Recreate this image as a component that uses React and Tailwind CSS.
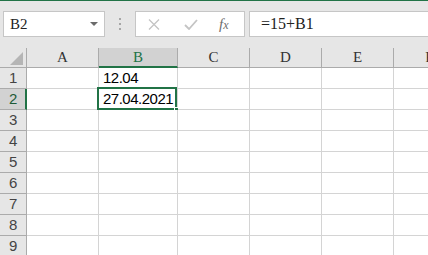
import React from "react";

const cols = [
  { key: "A", w: "w-[72px]" },
  { key: "B", w: "w-[79px]" },
  { key: "C", w: "w-[72px]" },
  { key: "D", w: "w-[72px]" },
  { key: "E", w: "w-[72px]" },
  { key: "F", w: "w-[72px]" },
];

const data = { "B1": "12.04", "B2": "27.04.2021" };

const serif = { fontFamily: '"Liberation Serif", serif' };

export default function App() {
  const rows = [1, 2, 3, 4, 5, 6, 7, 8, 9];

  return (
    <div className="w-[428px] h-[255px] overflow-hidden bg-[#e6e6e6] select-none">
      {/* top accent */}
      <div className="h-px bg-[#217346]" />

      {/* ================= FORMULA BAR ================= */}
      <div className="flex items-center h-[26px] mt-[10px]">
        <div className="ml-[3px] w-[102px] h-[26px] bg-white border border-[#c6c6c6] flex items-center justify-between pl-[6px] pr-[6px]">
          <span className="text-[15px] text-[#222]" style={serif}>B2</span>
          <svg width="8" height="4" viewBox="0 0 8 4">
            <path d="M0 0 L8 0 L4 4 Z" fill="#6b6b6b" />
          </svg>
        </div>

        <div className="w-[30px] flex flex-col items-center gap-[3px]">
          <span className="w-[2px] h-[2px] bg-[#a6a6a6]" />
          <span className="w-[2px] h-[2px] bg-[#a6a6a6]" />
          <span className="w-[2px] h-[2px] bg-[#a6a6a6]" />
        </div>

        <div className="w-[110px] h-[26px] bg-white border border-[#c6c6c6] flex items-center">
          <svg className="ml-[12px]" width="12" height="11" viewBox="0 0 12 11">
            <path d="M1 0.5 L11 10.5 M11 0.5 L1 10.5" stroke="#c4c4c4" strokeWidth="1.3" />
          </svg>
          <svg className="ml-[24px]" width="14" height="11" viewBox="0 0 14 11">
            <path d="M1 6 L5 10 L13 1" stroke="#c4c4c4" strokeWidth="1.8" fill="none" />
          </svg>
          <span
            className="ml-[21px] text-[15px] italic text-[#6e6e6e] leading-none"
            style={serif}
          >
            f<span className="text-[12px]">x</span>
          </span>
        </div>

        <div className="ml-[4px] flex-1 h-[26px] bg-white border-y border-l border-[#c6c6c6] flex items-center pl-[11px]">
          <span className="text-[16px] text-[#222]" style={serif}>=15+B1</span>
        </div>
      </div>

      {/* ================= SHEET ================= */}
      <div className="mt-[11px]">
        {/* column headers */}
        <div className="flex h-[20px]">
          <div className="w-[27px] shrink-0 border-r border-b border-[#ababab] flex items-end justify-end pr-[3px] pb-[2px]">
            <svg width="13" height="13" viewBox="0 0 13 13">
              <path d="M13 0 L13 13 L0 13 Z" fill="#b5b5b5" />
            </svg>
          </div>
          {cols.map((c) => (
            <div
              key={c.key}
              className={`${c.w} shrink-0 border-r border-[#ababab] flex items-center justify-center text-[15px] ${
                c.key === "B"
                  ? "bg-[#d2d2d2] text-[#217346] border-b-2 border-b-[#217346]"
                  : "text-[#333] border-b border-b-[#ababab]"
              }`}
              style={serif}
            >
              {c.key}
            </div>
          ))}
        </div>

        {/* rows */}
        {rows.map((r) => (
          <div key={r} className="flex h-[21px]">
            <div
              className={`w-[27px] shrink-0 border-b border-[#ababab] flex items-center pl-[9px] text-[15px] ${
                r === 2
                  ? "bg-[#d2d2d2] text-[#1e5b38] border-r-2 border-r-[#217346]"
                  : "bg-[#e6e6e6] text-[#444] border-r border-r-[#ababab]"
              }`}
              style={{ fontFamily: '"Liberation Sans", sans-serif' }}
            >
              {r}
            </div>
            {cols.map((c) => {
              const id = c.key + r;
              return (
                <div
                  key={id}
                  className={`${c.w} shrink-0 relative bg-white border-r border-b border-[#d4d4d4] flex items-center pl-[4px] text-[15px] tracking-[-0.5px] text-black`}
                  style={{ fontFamily: '"Liberation Sans", sans-serif' }}
                >
                  {data[id]}
                  {id === "B2" && (
                    <>
                      <div className="absolute -left-[2px] -top-[2px] right-0 -bottom-[1px] border-2 border-[#217346]" />
                      <div className="absolute -right-[3px] -bottom-[4px] w-[6px] h-[6px] bg-[#217346] border border-white" />
                    </>
                  )}
                </div>
              );
            })}
          </div>
        ))}
      </div>
    </div>
  );
}
